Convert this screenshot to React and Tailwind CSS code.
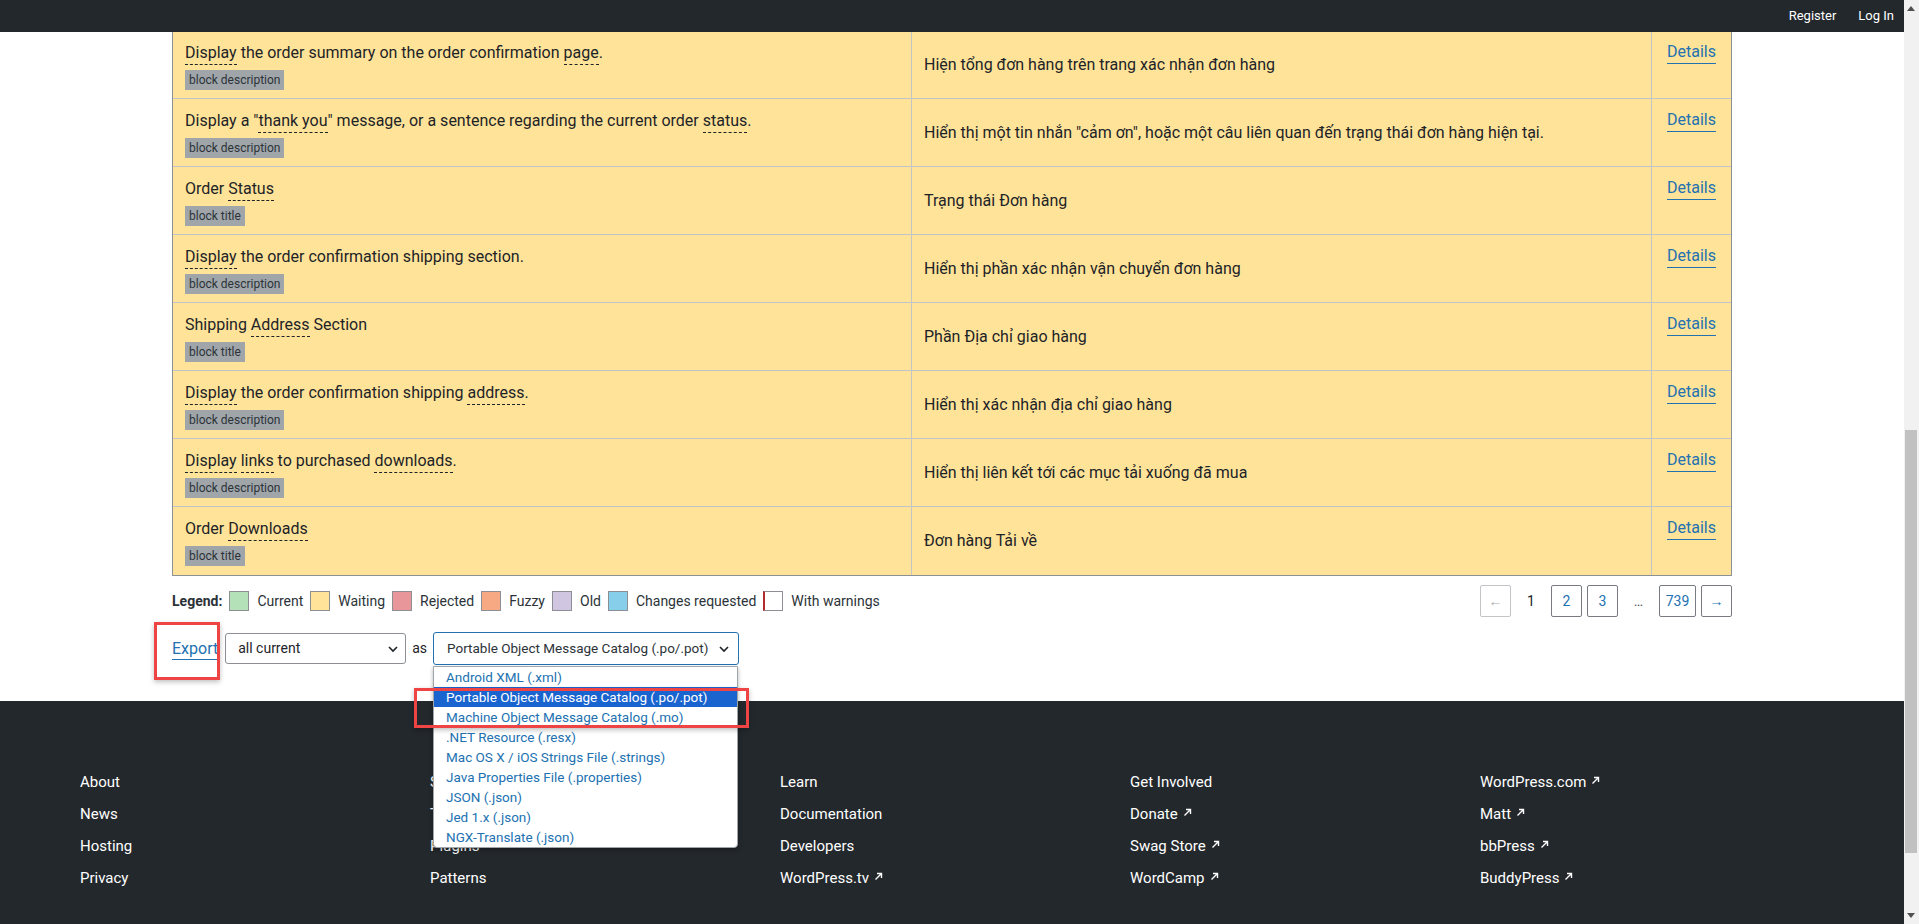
import React from "react";

const font = "font-['Roboto','Liberation_Sans',sans-serif]";

const rows = [
  {
    src: "[Display] the order summary on the order confirmation [page].",
    type: "block description",
    tr: "Hiện tổng đơn hàng trên trang xác nhận đơn hàng",
  },
  {
    src: 'Display a "[thank you]" message, or a sentence regarding the current order [status].',
    type: "block description",
    tr: 'Hiển thị một tin nhắn "cảm ơn", hoặc một câu liên quan đến trạng thái đơn hàng hiện tại.',
  },
  { src: "Order [Status]", type: "block title", tr: "Trạng thái Đơn hàng" },
  {
    src: "[Display] the order confirmation shipping section.",
    type: "block description",
    tr: "Hiển thị phần xác nhận vận chuyển đơn hàng",
  },
  { src: "Shipping [Address] Section", type: "block title", tr: "Phần Địa chỉ giao hàng" },
  {
    src: "[Display] the order confirmation shipping [address].",
    type: "block description",
    tr: "Hiển thị xác nhận địa chỉ giao hàng",
  },
  {
    src: "[Display] [links] to purchased [downloads].",
    type: "block description",
    tr: "Hiển thị liên kết tới các mục tải xuống đã mua",
  },
  { src: "Order [Downloads]", type: "block title", tr: "Đơn hàng Tải về" },
];

const legend = [
  ["Current", "bg-[#b5e1b9] border-[#8c8f94]"],
  ["Waiting", "bg-[#ffe399] border-[#8c8f94]"],
  ["Rejected", "bg-[#e9969a] border-[#8c8f94]"],
  ["Fuzzy", "bg-[#f7a984] border-[#8c8f94]"],
  ["Old", "bg-[#d0c6e2] border-[#8c8f94]"],
  ["Changes requested", "bg-[#87ceeb] border-[#8c8f94]"],
  ["With warnings", "bg-white border-[#8c8f94] border-l-2 border-l-[#b32d2e]"],
];

const formats = [
  "Android XML (.xml)",
  "Portable Object Message Catalog (.po/.pot)",
  "Machine Object Message Catalog (.mo)",
  ".NET Resource (.resx)",
  "Mac OS X / iOS Strings File (.strings)",
  "Java Properties File (.properties)",
  "JSON (.json)",
  "Jed 1.x (.json)",
  "NGX-Translate (.json)",
];

const footer = [
  [["About"], ["News"], ["Hosting"], ["Privacy"]],
  [["Showcase"], ["Themes"], ["Plugins"], ["Patterns"]],
  [["Learn"], ["Documentation"], ["Developers"], ["WordPress.tv", 1]],
  [["Get Involved"], ["Donate", 1], ["Swag Store", 1], ["WordCamp", 1]],
  [["WordPress.com", 1], ["Matt", 1], ["bbPress", 1], ["BuddyPress", 1]],
];

function Source({ text }) {
  const parts = text.split(/(\[[^\]]+\])/);
  return (
    <span>
      {parts.map((p, i) =>
        p.startsWith("[") ? (
          <span key={i} className="border-b border-dashed border-[#1d2327] pb-[2px]">
            {p.slice(1, -1)}
          </span>
        ) : (
          <span key={i}>{p}</span>
        )
      )}
    </span>
  );
}

function Chevron() {
  return (
    <svg width="12" height="12" viewBox="0 0 12 12" className="shrink-0">
      <polyline points="2,4 6,8 10,4" fill="none" stroke="#1d2327" strokeWidth="1.6" />
    </svg>
  );
}

function ExtArrow() {
  return (
    <svg width="9" height="9" viewBox="0 0 9 9" className="inline-block ml-[5px] mb-[5px]">
      <path d="M1.5 7.5 L7 2 M3 1.5 H7.5 V6" fill="none" stroke="white" strokeWidth="1.4" />
    </svg>
  );
}

function PageBox({ children, muted, w = "w-[31px]" }) {
  return (
    <span
      className={`${w} h-8 rounded-[2px] border flex items-center justify-center ${
        muted ? "border-[#c3c4c7] text-[#a7aaad]" : "border-[#787c82] text-[#2271b1]"
      }`}
    >
      {children}
    </span>
  );
}

export default function App() {
  return (
    <div className={`${font} w-[1919px] h-[924px] overflow-hidden flex bg-white text-[#1d2327]`}>
      <div className="relative flex-1 flex flex-col">
        {/* admin bar */}
        <div className="h-8 shrink-0 bg-[#23282d] flex items-center justify-end pr-[10px] gap-[22px] text-[13px] text-white">
          <span>Register</span>
          <span>Log In</span>
        </div>

        <div className="px-[172px]">
          {/* translations */}
          <div className="border-x border-b border-[#8c8f94] bg-[#ffe399]">
            {rows.map((r, i) => (
              <div
                key={i}
                className={`grid grid-cols-[739px_740px_1fr] ${i === 0 ? "h-[67px]" : "h-[68px]"} ${
                  i < rows.length - 1 ? "border-b border-[#c3c4c7]" : ""
                }`}
              >
                <div className={`border-r border-[#c3c4c7] px-3 ${i === 0 ? "pt-[9px]" : "pt-[10px]"}`}>
                  <div className="text-[16px] leading-6">
                    <Source text={r.src} />
                  </div>
                  <div className="mt-[5px] inline-block bg-[#a0a5aa] px-[4px] h-5 leading-5 text-[12px] text-[#2c3338]">
                    {r.type}
                  </div>
                </div>
                <div className="border-r border-[#c3c4c7] px-3 flex items-center text-[16px]">{r.tr}</div>
                <div className={`px-[15px] ${i === 0 ? "pt-[8px]" : "pt-[9px]"}`}>
                  <span className="text-[16px] leading-6 text-[#2271b1] underline underline-offset-[6px]">
                    Details
                  </span>
                </div>
              </div>
            ))}
          </div>

          {/* legend + pagination */}
          <div className="mt-[9px] flex items-center justify-between">
            <div className="flex items-center text-[14px] text-[#2c3338]">
              <span className="font-bold mr-[7px]">Legend:</span>
              {legend.map(([label, cls]) => (
                <div key={label} className="flex items-center mr-[7px]">
                  <span className={`w-5 h-5 border ${cls}`} />
                  <span className="ml-[8px]">{label}</span>
                </div>
              ))}
            </div>
            <div className="flex items-center gap-[5px] text-[14px]">
              <PageBox muted>←</PageBox>
              <span className="w-[30px] h-8 flex items-center justify-center text-[#1d2327]">1</span>
              <PageBox>2</PageBox>
              <PageBox>3</PageBox>
              <span className="w-[31px] h-8 flex items-center justify-center text-[#50575e]">…</span>
              <PageBox w="w-[37px]">739</PageBox>
              <PageBox>→</PageBox>
            </div>
          </div>

          {/* export */}
          <div className="mt-[15px] flex items-center h-[33px] whitespace-nowrap">
            <span className="text-[16px] text-[#2271b1] underline underline-offset-[5px]">Export</span>
            <div className="ml-[7px] w-[181px] h-[31px] border border-[#8c8f94] rounded-[3px] flex items-center justify-between pl-[12px] pr-[6px] text-[14px]">
              <span>all current</span>
              <Chevron />
            </div>
            <span className="mx-[6px] text-[14px]">as</span>
            <div className="w-[306px] h-[33px] border border-[#2271b1] rounded-[3px] flex items-center justify-between pl-[13px] pr-[8px] text-[13.5px] text-[#2c3338]">
              <span>Portable Object Message Catalog (.po/.pot)</span>
              <Chevron />
            </div>
          </div>
        </div>

        {/* footer */}
        <div className="mt-auto h-[223px] bg-[#23282d] pt-[65px] pl-[80px]">
          <div className="grid grid-cols-[350px_350px_350px_350px_350px]">
            {footer.map((col, ci) => (
              <ul key={ci}>
                {col.map(([t, ext]) => (
                  <li key={t} className="h-8 leading-8 text-[15px] text-white">
                    {t}
                    {ext ? <ExtArrow /> : null}
                  </li>
                ))}
              </ul>
            ))}
          </div>
        </div>

        {/* open select dropdown */}
        <div className="absolute left-[433px] top-[666px] w-[305px] bg-white border border-[#a0a5aa] rounded-b-[4px] shadow-[0_2px_4px_rgba(0,0,0,0.3)] text-[13.5px] whitespace-nowrap">
          {formats.map((f, i) => (
            <div
              key={f}
              className={`h-5 leading-5 pl-[12px] ${i === 1 ? "bg-[#1a64d0] text-white" : "text-[#2271b1]"}`}
            >
              {f}
            </div>
          ))}
        </div>

        {/* annotation boxes */}
        <div className="absolute left-[154px] top-[622px] w-[66px] h-[58px] border-[3px] border-[#ef4444] shadow-[0_2px_5px_rgba(0,0,0,0.25)]" />
        <div className="absolute left-[414px] top-[688px] w-[335px] h-[40px] border-[3px] border-[#ef4444] shadow-[0_2px_5px_rgba(0,0,0,0.25)]" />
      </div>

      {/* scrollbar */}
      <div className="w-4 h-full bg-[#f1f1f1] flex flex-col items-center">
        <div className="h-[17px] flex items-center justify-center">
          <svg width="8" height="5" viewBox="0 0 8 5">
            <polygon points="0,5 4,0 8,5" fill="#505050" />
          </svg>
        </div>
        <div className="mt-[413px] w-[12px] h-[423px] bg-[#c1c1c1]" />
        <div className="mt-auto h-[17px] flex items-center justify-center">
          <svg width="8" height="5" viewBox="0 0 8 5">
            <polygon points="0,0 8,0 4,5" fill="#505050" />
          </svg>
        </div>
      </div>
    </div>
  );
}
